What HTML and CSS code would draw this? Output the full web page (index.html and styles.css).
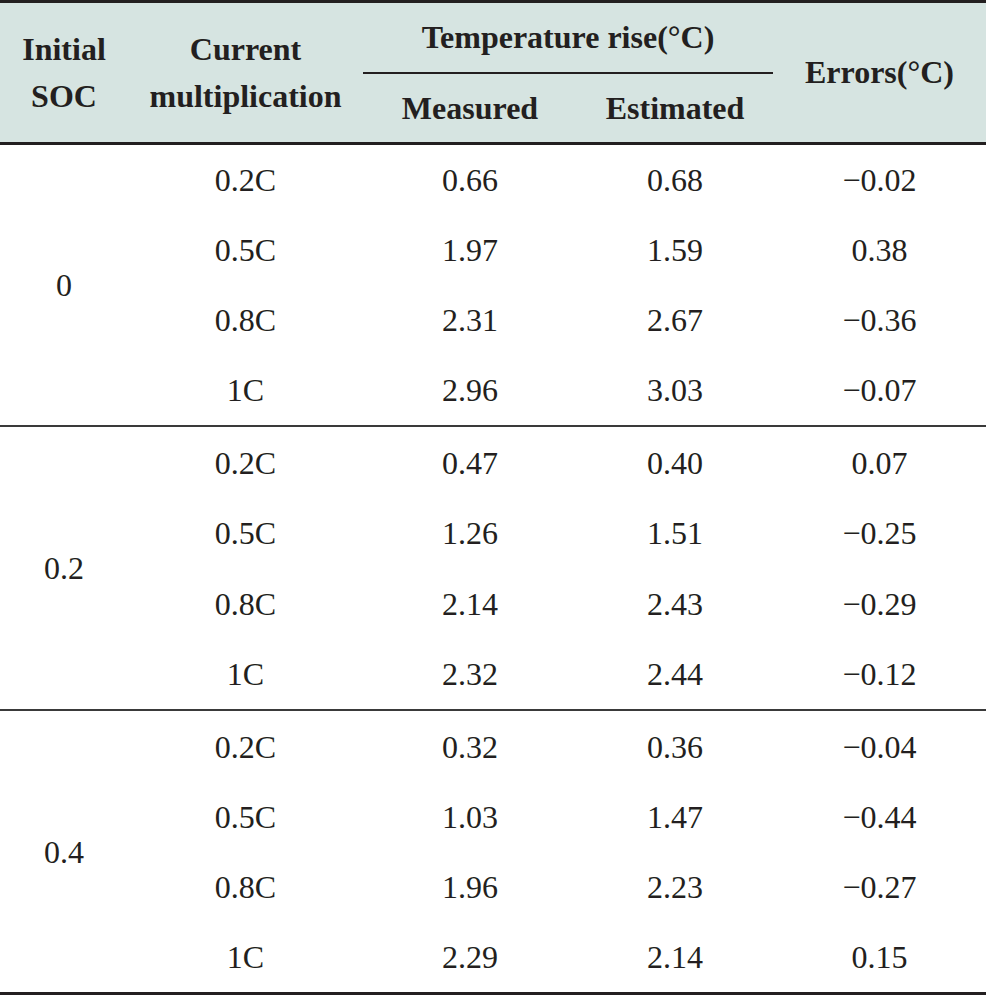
FILE: index.html
```html
<!DOCTYPE html>
<html>
<head>
<meta charset="utf-8">
<link rel="stylesheet" href="styles.css">
</head>
<body>
<table class="data">
  <colgroup>
    <col class="c1"><col class="c2"><col class="c3"><col class="c4"><col class="c5">
  </colgroup>
  <thead>
    <tr class="h1">
      <th rowspan="2" class="stack">Initial<br>SOC</th>
      <th rowspan="2" class="stack">Current<br>multiplication</th>
      <th colspan="2" class="group">Temperature rise(°C)</th>
      <th rowspan="2">Errors(°C)</th>
    </tr>
    <tr class="h2">
      <th>Measured</th>
      <th>Estimated</th>
    </tr>
  </thead>
  <tbody class="grp">
    <tr><td rowspan="4">0</td><td>0.2C</td><td>0.66</td><td>0.68</td><td>−0.02</td></tr>
    <tr><td>0.5C</td><td>1.97</td><td>1.59</td><td>0.38</td></tr>
    <tr><td>0.8C</td><td>2.31</td><td>2.67</td><td>−0.36</td></tr>
    <tr class="last"><td>1C</td><td>2.96</td><td>3.03</td><td>−0.07</td></tr>
  </tbody>
  <tbody class="grp tall">
    <tr><td rowspan="4">0.2</td><td>0.2C</td><td>0.47</td><td>0.40</td><td>0.07</td></tr>
    <tr><td>0.5C</td><td>1.26</td><td>1.51</td><td>−0.25</td></tr>
    <tr><td>0.8C</td><td>2.14</td><td>2.43</td><td>−0.29</td></tr>
    <tr class="last"><td>1C</td><td>2.32</td><td>2.44</td><td>−0.12</td></tr>
  </tbody>
  <tbody class="grp tall end">
    <tr><td rowspan="4">0.4</td><td>0.2C</td><td>0.32</td><td>0.36</td><td>−0.04</td></tr>
    <tr><td>0.5C</td><td>1.03</td><td>1.47</td><td>−0.44</td></tr>
    <tr><td>0.8C</td><td>1.96</td><td>2.23</td><td>−0.27</td></tr>
    <tr class="last"><td>1C</td><td>2.29</td><td>2.14</td><td>0.15</td></tr>
  </tbody>
</table>
</body>
</html>
```
FILE: styles.css
```css
html, body {
  margin: 0;
  padding: 0;
  background: #ffffff;
}

.data {
  width: 986px;
  border-collapse: collapse;
  table-layout: fixed;
  font-family: "Liberation Serif", "Times New Roman", serif;
  font-size: 32px;
  color: #231f20;
}

.c1 { width: 128px; }
.c2 { width: 235px; }
.c3 { width: 214px; }
.c4 { width: 196px; }
.c5 { width: 213px; }

.data thead {
  background: #d6e4e1;
}

.data th {
  font-weight: bold;
  text-align: center;
  vertical-align: middle;
  padding: 0;
  line-height: 47px;
}

.h1 th {
  border-top: 3px solid #231f20;
}

.h1 {
  height: 71px;
}

.h2 {
  height: 71px;
}

.h2 th {
  border-bottom: 3px solid #231f20;
  padding-top: 2px;
}

.h1 th[rowspan] {
  border-bottom: 3px solid #231f20;
}

.group {
  border-bottom: 2px solid #231f20;
  padding-top: 3px;
}

.data td {
  text-align: center;
  vertical-align: middle;
  padding: 0;
  height: 70px;
  line-height: 36px;
}

.tall tr:nth-child(odd) td {
  height: 71px;
}

.end tr:nth-child(3) td {
  height: 70px;
}

.grp .last td,
.grp td[rowspan] {
  border-bottom: 2px solid #3a3a3a;
}

.grp.end .last td,
.grp.end td[rowspan] {
  border-bottom: 3px solid #231f20;
}
```
